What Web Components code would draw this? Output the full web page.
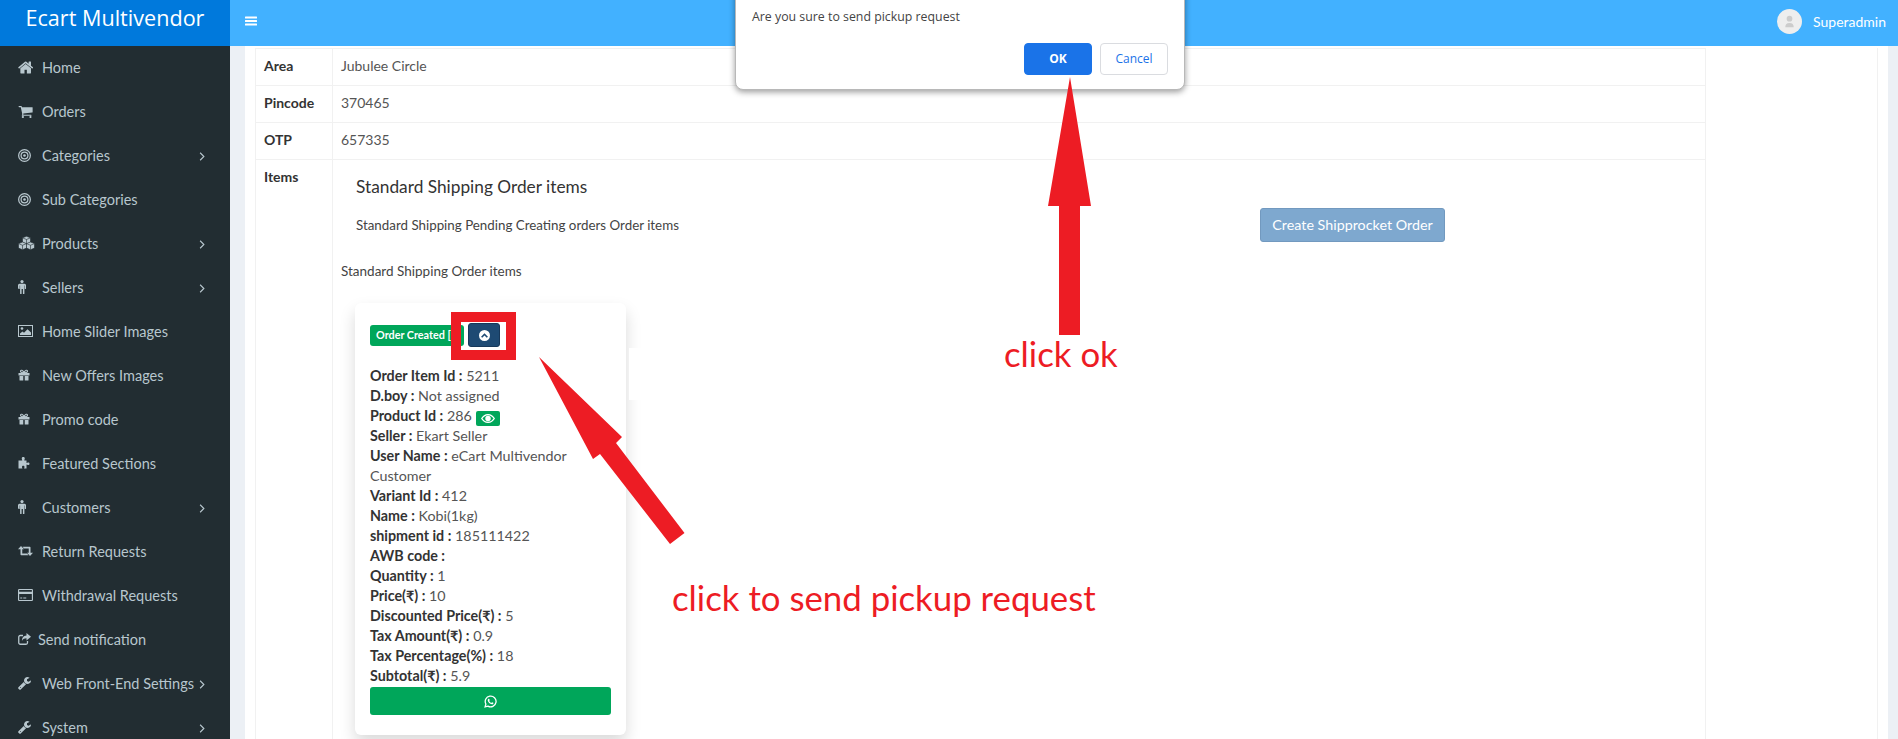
<!DOCTYPE html>
<html>
<head>
<meta charset="utf-8">
<title>Ecart Multivendor</title>
<style>
  html, body { margin: 0; height: 739px; overflow: hidden; background: #ecf0f5; }
  body { font: 14px Lato, "Noto Sans", sans-serif; color: #555; }
</style>
</head>
<body>
<k-app></k-app>

<script>
const ICONS = {
  home: {vb: '0 0 1664 1408', body: '<g transform="translate(0,-192)"><path fill="currentColor" d="M1408 992v480q0 26-19 45t-45 19h-384v-384h-256v384h-384q-26 0-45-19t-19-45v-480q0-1 .5-3t.5-3l575-474 575 474q1 2 1 6zm223-69l-62 74q-8 9-21 11h-3q-13 0-21-7l-692-577-692 577q-12 8-24 7-13-2-21-11l-62-74q-8-10-7-23.500t11-21.500l719-599q32-26 76-26t76 26l244 204v-195q0-14 9-23t23-9h192q14 0 23 9t9 23v408l219 182q10 8 11 21.500t-7 23.500z"/></g>'},
  cart: {vb: '0 128 1728 1536', body: '<path fill="currentColor" d="M704 1536q0 52-38 90t-90 38-90-38-38-90 38-90 90-38 90 38 38 90zm896 0q0 52-38 90t-90 38-90-38-38-90 38-90 90-38 90 38 38 90zm128-1088v512q0 24-16.500 42.500t-40.500 21.500l-1044 122q13 60 13 70 0 16-24 64h920q26 0 45 19t19 45-19 45-45 19h-1024q-26 0-45-19t-19-45q0-11 8-31.500t16-36 21.500-40 15.500-29.500l-177-823h-204q-26 0-45-19t-19-45 19-45 45-19h256q16 0 28.500 6.500t19.500 15.500 13 24.500 8 26 5.500 29.500 4.500 26h1201q26 0 45 19t19 45z"/>'},
  bullseye: {vb: '0 0 24 24', body: '<g fill="none" stroke="currentColor" stroke-width="2.300"><circle cx="12" cy="12" r="10.800"/><circle cx="12" cy="12" r="6.300"/></g><circle cx="12" cy="12" r="2.400" fill="currentColor"/>'},
  cubes: {vb: '0 0 34 28', body: '<g fill="currentColor" stroke="#222d32" stroke-width="1.200" stroke-linejoin="round"><path d="M17 .5l8 3.200v9l-8 3.300-8-3.300v-9z"/><path d="M9 12l8 3.200v9L9 27.500 1 24.200v-9z"/><path d="M25 12l8 3.200v9l-8 3.300-8-3.300v-9z"/><path fill="none" d="M9 3.700l8 3.300 8-3.300M17 7v9M1 15.200l8 3.300 8-3.300M9 18.500v9M17 15.200l8 3.300 8-3.300M25 18.500v9"/></g>'},
  male: {vb: '0 0 16 28', body: '<circle cx="8" cy="3.200" r="3.200" fill="currentColor"/><path fill="currentColor" d="M3 7.500h10a3 3 0 0 1 3 3V17a1.200 1.200 0 0 1-2.400 0v-6h-.8v16a1.500 1.500 0 0 1-3 0v-9H7.200v9a1.500 1.500 0 0 1-3 0V11h-.8v6A1.200 1.200 0 0 1 1 17H0v-6.500a3 3 0 0 1 3-3z"/>'},
  picture: {vb: '0 0 30 24', body: '<rect x="1" y="1" width="28" height="22" fill="none" stroke="currentColor" stroke-width="2"/><circle cx="8" cy="7" r="2.600" fill="currentColor"/><path fill="currentColor" d="M4 20v-3l5-4 3 2.500 7-7 7 6.500v5z"/>'},
  gift: {vb: '0 0 24 24', body: '<path fill="currentColor" d="M1 8h22v5H1zM3 14h7.500v9H4a1 1 0 0 1-1-1zM13.500 14H21v8a1 1 0 0 1-1 1h-6.500zM10.500 8h3v5h-3z"/><path fill="none" stroke="currentColor" stroke-width="2.200" d="M12 7.500C10 2 5 1 5 4.500 5 7 9 7.500 12 7.500c3 0 7-.5 7-3C19 1 14 2 12 7.500z"/>'},
  puzzle: {vb: '0 0 26 24', body: '<path fill="currentColor" d="M5 7h3.500C8 4.500 7.500 4 7.500 2.800 7.500 1 9 0 10.500 0s3 1 3 2.800C13.500 4 13 4.500 12.500 7H17v5c1.500-.6 2-1 3-1 2 0 3 .8 3 2.300S22 16 20 16c-1 0-1.500-.4-3-1v8h-5c.6-1.500 1-2 1-3 0-1.500-1-2.500-2.500-2.500S8 18.500 8 20c0 1 .4 1.500 1 3H1V7z"/>'},
  retweet: {vb: '0 0 30 20', body: '<path fill="currentColor" d="M6 0l6 6.500H8.500V15H18l3 3.500H6.500a1.500 1.500 0 0 1-1.500-1.500V6.500H0zM24 20l-6-6.500h3.500V5H12L9 1.500h14.500A1.500 1.500 0 0 1 25 3v10.500h5z"/>'},
  card: {vb: '0 0 30 24', body: '<path fill="currentColor" d="M2.500 0h25A2.500 2.500 0 0 1 30 2.500v19a2.500 2.500 0 0 1-2.500 2.500h-25A2.500 2.500 0 0 1 0 21.500v-19A2.500 2.500 0 0 1 2.500 0zM2.300 2.200v3.300h25.400V2.200zM2.300 10v11.800h25.400V10zM4.500 17h4v2h-4zM10.500 17h6v2h-6z" fill-rule="evenodd"/>'},
  share: {vb: '0 0 26 24', body: '<path fill="none" stroke="currentColor" stroke-width="2.600" d="M19 16v3.500a3 3 0 0 1-3 3H4.500a3 3 0 0 1-3-3V8a3 3 0 0 1 3-3H10"/><path fill="currentColor" d="M17 0l9 7.500-9 7.500v-4.500C12 10.500 9 12 8 16c-.5-6 3-10.500 9-11z"/>'},
  wrench: {vb: '64 128 1664 1664', body: '<path fill="currentColor" d="M448 1472q0-26-19-45t-45-19-45 19-19 45 19 45 45 19 45-19 19-45zm644-420l-682 682q-37 37-90 37-52 0-91-37l-106-108q-38-36-38-90 0-53 38-91l681-681q39 98 114.500 173.500t173.500 114.500zm634-435q0 39-23 106-47 134-164.500 217.500t-258.500 83.500q-185 0-316.500-131.500t-131.500-316.500 131.500-316.500 316.500-131.500q58 0 121.500 16.500t107.500 46.500q16 11 16 28t-16 28l-293 169v224l193 111q5-3 79-48.500t135.500-81 70.500-35.500q15 0 23.500 10t8.500 25z"/>'},
  bars: {vb: '0 0 24 20', body: '<path fill="currentColor" d="M1 1h22a1 1 0 0 1 1 1v2a1 1 0 0 1-1 1H1a1 1 0 0 1-1-1V2a1 1 0 0 1 1-1zM1 8h22a1 1 0 0 1 1 1v2a1 1 0 0 1-1 1H1a1 1 0 0 1-1-1V9a1 1 0 0 1 1-1zM1 15h22a1 1 0 0 1 1 1v2a1 1 0 0 1-1 1H1a1 1 0 0 1-1-1v-2a1 1 0 0 1 1-1z"/>'},
  chevron: {vb: '0 0 8 12', body: '<path fill="none" stroke="currentColor" stroke-width="1.500" d="M1.500 1l5 5-5 5"/>'},
  up: {vb: '0 0 24 24', body: '<path fill="currentColor" fill-rule="evenodd" d="M12 0a12 12 0 1 1 0 24 12 12 0 0 1 0-24zM12 7l-7.500 7.500 2.500 2.500 5-5 5 5 2.500-2.500z"/>'},
  eye: {vb: '0 0 28 18', body: '<path fill="currentColor" fill-rule="evenodd" d="M14 0c6 0 11 3.500 14 9-3 5.500-8 9-14 9S3 14.500 0 9c3-5.500 8-9 14-9zM14 2.500C9.800 2.500 5.500 5 3 9c2.500 4 6.800 6.500 11 6.500S22.500 13 25 9c-2.500-4-6.800-6.500-11-6.500zM14 3.500a5.500 5.500 0 1 1 0 11 5.500 5.500 0 0 1 0-11z"/>'},
  whatsapp: {vb: '0 0 24 24', body: '<path fill="none" stroke="currentColor" stroke-width="2.400" d="M2 22l1.500-5.300A10 10 0 1 1 7.300 20.600z"/><path fill="currentColor" d="M8.500 6.800c.5 0 1 0 1.200.6l.8 2c.1.400-.6 1.200-.9 1.600.9 1.700 2.200 2.900 3.900 3.700.5-.5 1.100-1.300 1.500-1.200l2.100 1c.5.300.4.800.2 1.400-.4 1-1.700 1.600-2.800 1.400-3.800-.7-7-3.800-7.600-7-.2-1.500.7-3.500 1.600-3.500z"/>'},
  user: {vb: '0 0 24 24', body: '<circle cx="12" cy="8" r="4" fill="currentColor"/><path fill="currentColor" d="M6 20c0-4 2-6 6-6s6 2 6 6z"/>'},
};

class KIcon extends HTMLElement {
  constructor() {
    super();
    this.attachShadow({mode: 'open'});
  }

  connectedCallback() {
    let icon = ICONS[this.getAttribute('name')];
    let h = this.getAttribute('h') || 14;
    let [, , vw, vh] = icon.vb.split(' ').map(Number);
    this.shadowRoot.innerHTML = `
      <style>
        :host { display: inline-flex; flex: none; }
        svg { display: block; }
      </style>
      <svg viewBox="${icon.vb}" width="${h * vw / vh}" height="${h}">${icon.body}</svg>
    `;
  }
}
customElements.define('k-icon', KIcon);

class KNavbar extends HTMLElement {
  constructor() {
    super();
    this.attachShadow({mode: 'open'}).innerHTML = `
      <style>
        :host { display: flex; height: 46px; background: #42b1ff; color: #fff; }
        .brand {
          width: 230px;
          background: #0079dc;
          text-align: center;
          font: 21.600px/36px "Open Sans", sans-serif;
        }
        .bars { margin: 16px 0 0 15px; height: 10px; }
        .user {
          margin-left: auto;
          padding-right: 12px;
          display: flex;
          align-items: center;
          height: 42px;
          gap: 11px;
        }
        .avatar {
          width: 25px;
          height: 25px;
          border-radius: 50%;
          background: #eee;
          color: #ccc;
          display: flex;
          align-items: center;
          justify-content: center;
        }
      </style>
      <div class="brand">Ecart Multivendor</div>
      <k-icon class="bars" name="bars" h="10"></k-icon>
      <div class="user">
        <span class="avatar"><k-icon name="user" h="17"></k-icon></span>
        <span>Superadmin</span>
      </div>
    `;
  }
}
customElements.define('k-navbar', KNavbar);

class KSideItem extends HTMLElement {
  constructor() {
    super();
    this.attachShadow({mode: 'open'});
  }

  connectedCallback() {
    let icon = this.getAttribute('icon');
    let h = this.getAttribute('h') || 13;
    let arrow = this.hasAttribute('arrow') ? '<k-icon class="arrow" name="chevron" h="9"></k-icon>' : '';
    this.shadowRoot.innerHTML = `
      <style>
        :host {
          display: flex;
          align-items: center;
          height: 44px;
          padding-left: 18px;
          color: #b8c7ce;
          white-space: nowrap;
          font-size: 14.500px;
        }
        .ic { width: var(--ic-w, 24px); display: flex; flex: none; }
        .arrow { position: absolute; left: 199px; margin-top: 3px; }
      </style>
      <span class="ic"><k-icon name="${icon}" h="${h}"></k-icon></span>
      <slot></slot>
      ${arrow}
    `;
  }
}
customElements.define('k-side-item', KSideItem);

class KSidebar extends HTMLElement {
  constructor() {
    super();
    this.attachShadow({mode: 'open'}).innerHTML = `
      <style>
        :host {
          display: block;
          width: 230px;
          flex: none;
          background: #222d32;
          overflow: hidden;
          position: relative;
        }
        div { margin-top: -1px; }
      </style>
      <div><slot></slot></div>
    `;
  }
}
customElements.define('k-sidebar', KSidebar);

class KRow extends HTMLElement {
  constructor() {
    super();
    this.attachShadow({mode: 'open'}).innerHTML = `
      <style>
        :host {
          display: grid;
          grid-template-columns: 77px 1fr;
          border-top: 1px solid #f1f1f1;
          min-height: 36px;
        }
        .k { padding: 8px 0 0 8px; font-weight: 700; color: #333; border-right: 1px solid #f1f1f1; line-height: 18px; }
        .v { padding: 8px 0 0 8px; line-height: 18px; }
      </style>
      <div class="k"><slot name="k"></slot></div>
      <div class="v"><slot></slot></div>
    `;
  }
}
customElements.define('k-row', KRow);

class KOrderCard extends HTMLElement {
  constructor() {
    super();
    this.attachShadow({mode: 'open'}).innerHTML = `
      <style>
        :host {
          display: block;
          position: relative;
          width: 271px;
          box-sizing: border-box;
          margin-left: 14px;
          padding: 22px 15px 20px;
          background: #fff;
          border-radius: 6px;
          box-shadow: 0 8px 16px rgba(0,0,0,.15);
          line-height: 20px;
          color: #555;
        }
        .top { display: flex; align-items: flex-start; gap: 4px; height: 41px; }
        .badge {
          width: 94px;
          height: 21px;
          box-sizing: border-box;
          padding-left: 6px;
          background: #00a65a;
          color: #fff;
          font-size: 10.800px;
          font-weight: 700;
          line-height: 20px;
          border-radius: 3px;
          overflow: hidden;
          white-space: nowrap;
        }
        .up {
          width: 32px;
          height: 24px;
          margin-top: -2px;
          box-sizing: border-box;
          background: #1e4a73;
          border: 1px solid #17385a;
          border-radius: 3px;
          color: #fff;
          display: flex;
          align-items: center;
          justify-content: center;
        }
        .wa {
          margin-top: 1px;
          height: 28px;
          background: #00a65a;
          border-radius: 3px;
          color: #fff;
          display: flex;
          align-items: center;
          justify-content: center;
        }
        .patch {
          position: absolute;
          left: 274px;
          top: 45px;
          width: 14px;
          height: 52px;
          background: #fff;
        }
      </style>
      <div class="top">
        <span class="badge">Order Created [ ]</span>
        <span class="up"><k-icon name="up" h="11"></k-icon></span>
      </div>
      <slot></slot>
      <div class="wa"><k-icon name="whatsapp" h="13"></k-icon></div>
      <div class="patch"></div>
    `;
  }
}
customElements.define('k-order-card', KOrderCard);

class KLine extends HTMLElement {
  constructor() {
    super();
    this.attachShadow({mode: 'open'}).innerHTML = `
      <style>
        :host { display: block; }
        b { font-weight: 700; color: #333; }
        .eye {
          display: inline-flex;
          vertical-align: -2px;
          align-items: center;
          justify-content: center;
          width: 24px;
          height: 15px;
          margin-left: 1px;
          background: #00a65a;
          color: #fff;
          border-radius: 2px;
        }
      </style>
      <b></b> <slot></slot>
    `;
  }

  connectedCallback() {
    this.shadowRoot.querySelector('b').textContent = this.getAttribute('k') + ' :';
    if (this.hasAttribute('eye')) {
      let eye = document.createElement('span');
      eye.className = 'eye';
      eye.innerHTML = '<k-icon name="eye" h="9"></k-icon>';
      this.shadowRoot.append(' ', eye);
    }
  }
}
customElements.define('k-line', KLine);

class KItems extends HTMLElement {
  constructor() {
    super();
    this.attachShadow({mode: 'open'}).innerHTML = `
      <style>
        :host { display: block; margin: -8px 0 0 -8px; color: #444; }
        .head { padding: 15px 0 0 23px; font-size: 17.300px; line-height: 24px; color: #333; }
        .sub { display: grid; grid-template-columns: 904px auto; padding-left: 23px; margin-top: 9px; align-items: center; height: 34px; font-size: 13.350px; }
        .btn {
          width: 185px;
          height: 34px;
          box-sizing: border-box;
          background: #7ea8cf;
          border: 1px solid #7299bf;
          border-radius: 3px;
          color: #fff;
          font-size: 14.300px;
          line-height: 32px;
          text-align: center;
          white-space: nowrap;
        }
        .std { padding: 19px 0 0 8px; font-size: 13.500px; line-height: 20px; margin-bottom: 22px; }
        .card { font-size: 14.300px; padding-left: 8px; }
      </style>
      <div class="head">Standard Shipping Order items</div>
      <div class="sub">
        <span>Standard Shipping Pending Creating orders Order items</span>
        <span class="btn">Create Shipprocket Order</span>
      </div>
      <div class="std">Standard Shipping Order items</div>
      <div class="card"><slot></slot></div>
    `;
  }
}
customElements.define('k-items', KItems);

class KDialog extends HTMLElement {
  constructor() {
    super();
    this.attachShadow({mode: 'open'}).innerHTML = `
      <style>
        :host {
          position: absolute;
          left: 735px;
          top: -20px;
          width: 450px;
          height: 110px;
          box-sizing: border-box;
          padding: 27px 16px 0;
          background: #fff;
          border: 1px solid #b8b8b8;
          border-radius: 8px;
          box-shadow: 0 2px 6px rgba(0,0,0,.4);
          font: 12.350px/18px "Open Sans", sans-serif;
          color: #444;
        }
        .acts { display: flex; justify-content: flex-end; gap: 8px; margin-top: 17px; }
        .acts span {
          width: 68px;
          height: 32px;
          box-sizing: border-box;
          border-radius: 4px;
          text-align: center;
          line-height: 30px;
          font-size: 12px;
          border: 1px solid #dadce0;
          color: #1a73e8;
        }
        .acts .ok { background: #1a73e8; border-color: #1a73e8; color: #fff; font-weight: 700; }
      </style>
      <div>Are you sure to send pickup request</div>
      <div class="acts"><span class="ok">OK</span><span>Cancel</span></div>
    `;
  }
}
customElements.define('k-dialog', KDialog);

class KAnnotations extends HTMLElement {
  constructor() {
    super();
    this.attachShadow({mode: 'open'}).innerHTML = `
      <style>
        :host { position: absolute; left: 0; top: 0; width: 1898px; height: 739px; pointer-events: none; }
        svg { position: absolute; left: 0; top: 0; }
        span { position: absolute; color: #ed1c24; font: 34.800px/40px Lato, sans-serif; white-space: nowrap; }
      </style>
      <svg width="1898" height="739">
        <g fill="#ed1c24">
          <path d="M1070 77L1091 206H1080V335H1059V206H1048z"/>
          <path d="M539 357L622 437 616 443 684.500 533 670 544 600 454 593 459z"/>
        </g>
        <path fill="none" stroke="#ed1c24" stroke-width="10" d="M456 317H511V355H456z"/>
      </svg>
      <span style="left:1004px;top:334px">click ok</span>
      <span style="left:672px;top:578px">click to send pickup request</span>
    `;
  }
}
customElements.define('k-annotations', KAnnotations);

class KApp extends HTMLElement {
  constructor() {
    super();
    this.attachShadow({mode: 'open'}).innerHTML = `
      <style>
        :host { display: block; position: relative; height: 739px; overflow: hidden; }
        .body { display: flex; height: 693px; }
        main { flex: 1; padding: 0 10px 0 15px; min-width: 0; }
        .box { background: #fff; height: 100%; padding: 2px 0 0 10px; box-sizing: border-box; }
        .wrap { border-left: 1px solid #f1f1f1; border-right: 1px solid #f1f1f1; margin-right: 10px; height: 100%; }
        .table { width: 1450px; height: 100%; border-right: 1px solid #f1f1f1; box-sizing: border-box; display: flex; flex-direction: column; }
        .grow { flex: 1; }
      </style>
      <k-navbar></k-navbar>
      <div class="body">
        <k-sidebar>
          <k-side-item icon="home">Home</k-side-item>
          <k-side-item icon="cart">Orders</k-side-item>
          <k-side-item icon="bullseye" arrow>Categories</k-side-item>
          <k-side-item icon="bullseye">Sub Categories</k-side-item>
          <k-side-item icon="cubes" h="14" arrow>Products</k-side-item>
          <k-side-item icon="male" h="14" arrow>Sellers</k-side-item>
          <k-side-item icon="picture" h="12">Home Slider Images</k-side-item>
          <k-side-item icon="gift" h="12">New Offers Images</k-side-item>
          <k-side-item icon="gift" h="12">Promo code</k-side-item>
          <k-side-item icon="puzzle" h="12">Featured Sections</k-side-item>
          <k-side-item icon="male" h="14" arrow>Customers</k-side-item>
          <k-side-item icon="retweet" h="10">Return Requests</k-side-item>
          <k-side-item icon="card" h="12">Withdrawal Requests</k-side-item>
          <k-side-item icon="share" h="12" style="--ic-w:20px">Send notification</k-side-item>
          <k-side-item icon="wrench" arrow>Web Front-End Settings</k-side-item>
          <k-side-item icon="wrench" arrow>System</k-side-item>
        </k-sidebar>
        <main>
          <div class="box">
            <div class="wrap">
              <div class="table">
                <k-row><span slot="k">Area</span>Jubulee Circle</k-row>
                <k-row><span slot="k">Pincode</span>370465</k-row>
                <k-row><span slot="k">OTP</span>657335</k-row>
                <k-row class="grow">
                  <span slot="k">Items</span>
                  <k-items>
                    <k-order-card>
                      <k-line k="Order Item Id">5211</k-line>
                      <k-line k="D.boy">Not assigned</k-line>
                      <k-line k="Product Id" eye>286</k-line>
                      <k-line k="Seller">Ekart Seller</k-line>
                      <k-line k="User Name">eCart Multivendor Customer</k-line>
                      <k-line k="Variant Id">412</k-line>
                      <k-line k="Name">Kobi(1kg)</k-line>
                      <k-line k="shipment id">185111422</k-line>
                      <k-line k="AWB code"></k-line>
                      <k-line k="Quantity">1</k-line>
                      <k-line k="Price(₹)">10</k-line>
                      <k-line k="Discounted Price(₹)">5</k-line>
                      <k-line k="Tax Amount(₹)">0.9</k-line>
                      <k-line k="Tax Percentage(%)">18</k-line>
                      <k-line k="Subtotal(₹)">5.9</k-line>
                    </k-order-card>
                  </k-items>
                </k-row>
              </div>
            </div>
          </div>
        </main>
      </div>
      <k-dialog></k-dialog>
      <k-annotations></k-annotations>
    `;
  }
}
customElements.define('k-app', KApp);
</script>
</body>
</html>
